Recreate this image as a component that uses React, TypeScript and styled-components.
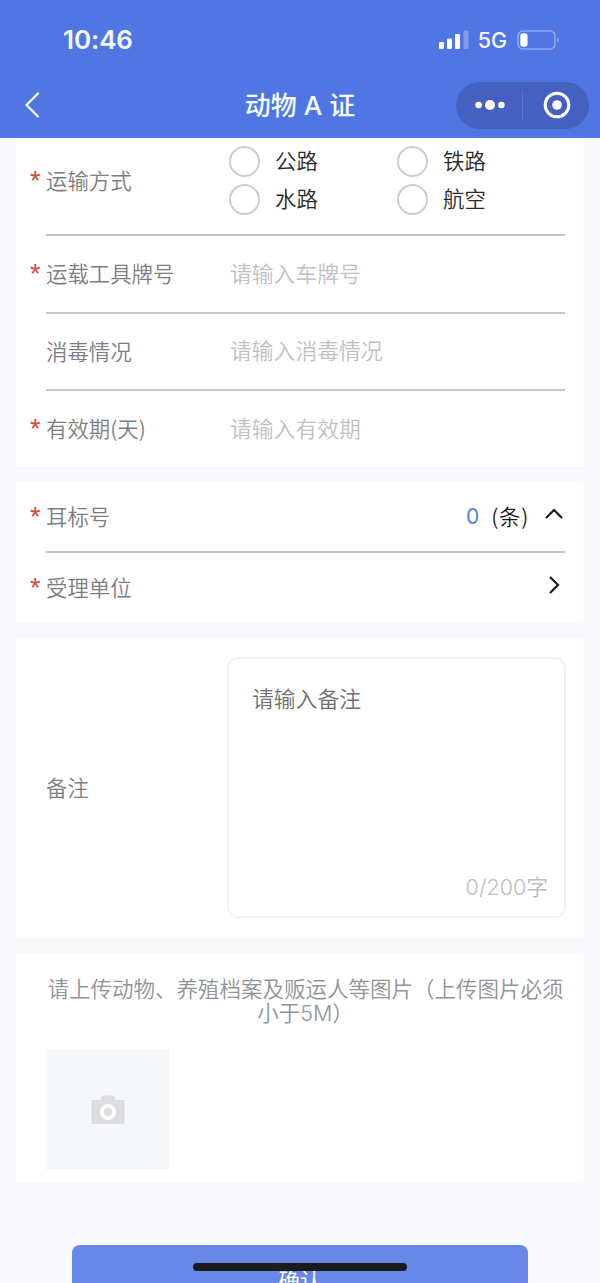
import React from 'react';
import styled, { createGlobalStyle } from 'styled-components';

const GlobalStyle = createGlobalStyle`
  * { box-sizing: border-box; }
  html, body { margin: 0; padding: 0; }
  body {
    background: #f9f9fe;
    font-family: Inter, "Noto Sans CJK SC", sans-serif;
    overflow: hidden;
  }
`;

const Screen = styled.div`
  width: 600px;
  height: 1283px;
  overflow: hidden;
  position: relative;
  display: flex;
  flex-direction: column;
  background: #f9f9fe;
`;

const Header = styled.header`
  flex: none;
  height: 138px;
  background: #5076e3;
  color: #fff;
`;

const StatusBar = styled.div`
  display: flex;
  justify-content: space-between;
  align-items: center;
  height: 80px;
  padding: 0 40px 0 63px;
`;

const Clock = styled.span`
  font-size: 26px;
  font-weight: 600;
  line-height: 30px;
  letter-spacing: -0.1px;
  color: #f4f9ff;
`;

const StatusIcons = styled.div`
  display: flex;
  align-items: center;
`;

const Network = styled.span`
  font-size: 21.5px;
  font-weight: 450;
  line-height: 26px;
  margin: 0 10px 0 9px;
  color: #f4f9ff;
`;

const NavBar = styled.div`
  display: grid;
  grid-template-columns: 144px 1fr 144px;
  align-items: center;
  height: 50px;
`;

const BackIcon = styled.svg`
  display: block;
  margin-left: 22px;
`;

const Title = styled.h1`
  margin: 0;
  padding-top: 2px;
  text-align: center;
  font-size: 26px;
  line-height: 36px;
  font-weight: 500;
  white-space: nowrap;
  color: #f7fbff;
`;

const Capsule = styled.div`
  display: flex;
  align-items: center;
  width: 133px;
  height: 47px;
  border-radius: 24px;
  background: #4561c0;
`;

const CapsuleHalf = styled.div`
  flex: 1;
  display: flex;
  justify-content: center;
  padding-left: 2px;
`;

const CapsuleDivider = styled.div`
  width: 1px;
  height: 30px;
  background: #5a74cb;
`;

const Form = styled.main`
  display: flex;
  flex-direction: column;
  gap: 16px;
  padding: 0 16px;
`;

const Card = styled.section<{ $height: number }>`
  height: ${(p) => p.$height}px;
  padding: 0 19px 0 14px;
  background: #fff;
`;

const Row = styled.div<{ $height: number; $lift?: number }>`
  display: flex;
  align-items: center;
  height: ${(p) => p.$height}px;
  padding-bottom: ${(p) => p.$lift ?? 2}px;
`;

const Divider = styled.div`
  height: 2px;
  margin-left: 16px;
  background: #c6c6c8;
`;

const Star = styled.span`
  width: 16px;
  flex: none;
  font-family: "Liberation Sans", sans-serif;
  font-size: 27px;
  line-height: 30px;
  padding-top: 2px;
  color: #d9483f;
`;

const Label = styled.span`
  width: 184px;
  flex: none;
  font-family: "Noto Sans CJK SC", sans-serif;
  font-weight: 350;
  font-size: 21.4px;
  line-height: 30px;
  color: #7c7d83;
  white-space: nowrap;
`;

const Placeholder = styled.span`
  font-size: 21.8px;
  font-weight: 350;
  line-height: 30px;
  padding-top: 1px;
  color: #c0c0c2;
`;

const Options = styled.div`
  display: grid;
  grid-template-columns: 168px 168px;
  grid-auto-rows: 38px;
  margin-left: -1px;
`;

const Option = styled.div`
  display: flex;
  align-items: center;
  gap: 15px;
  font-size: 21.4px;
  font-weight: 350;
  line-height: 30px;
  color: #28292c;
`;

const Radio = styled.span`
  width: 31px;
  height: 31px;
  border: 2px solid #cdcdcd;
  border-radius: 50%;
`;

const Trailing = styled.div`
  margin-left: auto;
  display: flex;
  align-items: center;
  font-family: "Noto Sans CJK SC", sans-serif;
  font-size: 21.4px;
  line-height: 30px;
  color: #1b1b1b;
`;

const Count = styled.span`
  color: #5a80d4;
  font-family: Inter, sans-serif;
  font-size: 21px;
  padding-top: 2px;
  margin-right: 12px;
`;

const Unit = styled.span`
  margin-right: 14px;
  letter-spacing: 0.7px;
  font-weight: 350;
`;

const Note = styled.div`
  display: flex;
  flex-direction: column;
  justify-content: space-between;
  flex: none;
  width: 339px;
  height: 261px;
  margin-left: -3px;
  padding: 25px 16px 14px 24px;
  border: 2px solid #f1f1f2;
  border-radius: 11px;
`;

const NoteHint = styled.span`
  margin-left: -1px;
  font-size: 21.8px;
  font-weight: 350;
  line-height: 30px;
  color: #707070;
`;

const NoteCount = styled.span`
  align-self: flex-end;
  font-size: 21.6px;
  font-weight: 350;
  line-height: 30px;
  color: #bcbcbc;
`;

const UploadHint = styled.p`
  margin: 0 0 0 16px;
  padding-top: 24px;
  text-align: center;
  font-size: 21.5px;
  font-weight: 350;
  line-height: 24px;
  color: #909398;
  white-space: nowrap;
`;

const UploadBox = styled.div`
  display: flex;
  align-items: center;
  justify-content: center;
  width: 123px;
  height: 121px;
  margin: 24px 0 0 16px;
  background: #f6f7f8;
`;

const Submit = styled.button`
  display: block;
  flex: none;
  width: 456px;
  height: 70px;
  margin: 63px auto 0;
  padding: 0;
  border: 0;
  border-radius: 8px;
  background: #6888e8;
  color: #fff;
  font-family: "Noto Sans CJK SC", sans-serif;
  font-size: 21.4px;
  line-height: 70px;
`;

const HomeIndicator = styled.div`
  position: absolute;
  left: 193px;
  top: 1263px;
  width: 214px;
  height: 8px;
  border-radius: 4px;
  background: #1a1b1f;
`;

const Signal = () => (
  <svg width="30" height="20" viewBox="0 0 30 20" fill="#fff">
    <rect x="0" y="12" width="5" height="7" rx="1.3" />
    <rect x="8" y="8.5" width="5" height="10.5" rx="1.3" />
    <rect x="16" y="4" width="5" height="15" rx="1.3" />
    <rect x="24.5" y="0.5" width="5" height="18.5" rx="1.3" opacity=".28" />
  </svg>
);

const Battery = () => (
  <svg width="43" height="20" viewBox="0 0 43 20">
    <rect x="1" y="1" width="37" height="18" rx="5" fill="none" stroke="#8fa8ee" strokeWidth="1.6" />
    <rect x="3.3" y="3.3" width="7.2" height="13.4" rx="2.6" fill="#fff" />
    <path d="M40 7.5c2.2.8 2.2 4.2 0 5z" fill="#8fa8ee" />
  </svg>
);

const Camera = () => (
  <svg width="34" height="30" viewBox="0 0 34 30">
    <path
      d="M1.5 5H9l2-3.6Q11.7 .5 13 .5h8q1.3 0 2 .9L25 5h7.500q1 0 1 1v22q0 1-1 1h-31q-1 0-1-1V6q0-1 1-1z"
      fill="#dcdddf"
    />
    <circle cx="17" cy="17" r="6.2" fill="#dcdddf" stroke="#f8f9fa" strokeWidth="4" />
  </svg>
);

const Field = ({ label, hint, required }: { label: string; hint: string; required?: boolean }) => (
  <Row $height={75.6} $lift={1}>
    <Star>{required ? '*' : ''}</Star>
    <Label>{label}</Label>
    <Placeholder>{hint}</Placeholder>
  </Row>
);

export default function App() {
  return (
    <>
      <GlobalStyle />
      <Screen>
        <Header>
          <StatusBar>
            <Clock>10:46</Clock>
            <StatusIcons>
              <Signal />
              <Network>5G</Network>
              <Battery />
            </StatusIcons>
          </StatusBar>
          <NavBar>
            <BackIcon width="20" height="28" viewBox="0 0 20 28" fill="none" stroke="#f2f8ff" strokeWidth="2.3" strokeLinecap="round" strokeLinejoin="round">
              <path d="M16 2.5 4.5 14 16 25.5" />
            </BackIcon>
            <Title>动物 A 证</Title>
            <Capsule>
              <CapsuleHalf>
                <svg width="30" height="12" viewBox="0 0 30 12" fill="#fff">
                  <circle cx="3.6" cy="6" r="3.3" />
                  <circle cx="15" cy="6" r="5" />
                  <circle cx="26.4" cy="6" r="3.3" />
                </svg>
              </CapsuleHalf>
              <CapsuleDivider />
              <CapsuleHalf>
                <svg width="28" height="28" viewBox="0 0 28 28">
                  <circle cx="14" cy="14" r="11.8" fill="none" stroke="#fff" strokeWidth="3" />
                  <circle cx="14" cy="14" r="4.8" fill="#fff" />
                </svg>
              </CapsuleHalf>
            </Capsule>
          </NavBar>
        </Header>

        <Form>
          <Card $height={328}>
            <Row $height={96} $lift={12}>
              <Star>*</Star>
              <Label>运输方式</Label>
              <Options>
                {['公路', '铁路', '水路', '航空'].map((name) => (
                  <Option key={name}>
                    <Radio />
                    {name}
                  </Option>
                ))}
              </Options>
            </Row>
            <Divider />
            <Field label="运载工具牌号" hint="请输入车牌号" required />
            <Divider />
            <Field label="消毒情况" hint="请输入消毒情况" />
            <Divider />
            <Field label="有效期(天)" hint="请输入有效期" required />
          </Card>

          <Card $height={141}>
            <Row $height={69}>
              <Star>*</Star>
              <Label>耳标号</Label>
              <Trailing>
                <Count>0</Count>
                <Unit>(条)</Unit>
                <svg width="22" height="18" viewBox="0 0 22 18" fill="none" stroke="#1b1b1b" strokeWidth="2.2">
                  <path d="M3 11 11 3l8 8" />
                </svg>
              </Trailing>
            </Row>
            <Divider />
            <Row $height={70}>
              <Star>*</Star>
              <Label>受理单位</Label>
              <Trailing>
                <svg width="22" height="26" viewBox="0 0 22 26" fill="none" stroke="#1b1b1b" strokeWidth="2.2">
                  <path d="M7 3l8 8-8 8" />
                </svg>
              </Trailing>
            </Row>
          </Card>

          <Card $height={298}>
            <Row $height={298}>
              <Star />
              <Label>备注</Label>
              <Note>
                <NoteHint>请输入备注</NoteHint>
                <NoteCount>0/200字</NoteCount>
              </Note>
            </Row>
          </Card>

          <Card $height={229}>
            <UploadHint>
              请上传动物、养殖档案及贩运人等图片（上传图片必须
              <br />
              小于5M）
            </UploadHint>
            <UploadBox>
              <Camera />
            </UploadBox>
          </Card>
        </Form>

        <Submit>确认</Submit>
        <HomeIndicator />
      </Screen>
    </>
  );
}
